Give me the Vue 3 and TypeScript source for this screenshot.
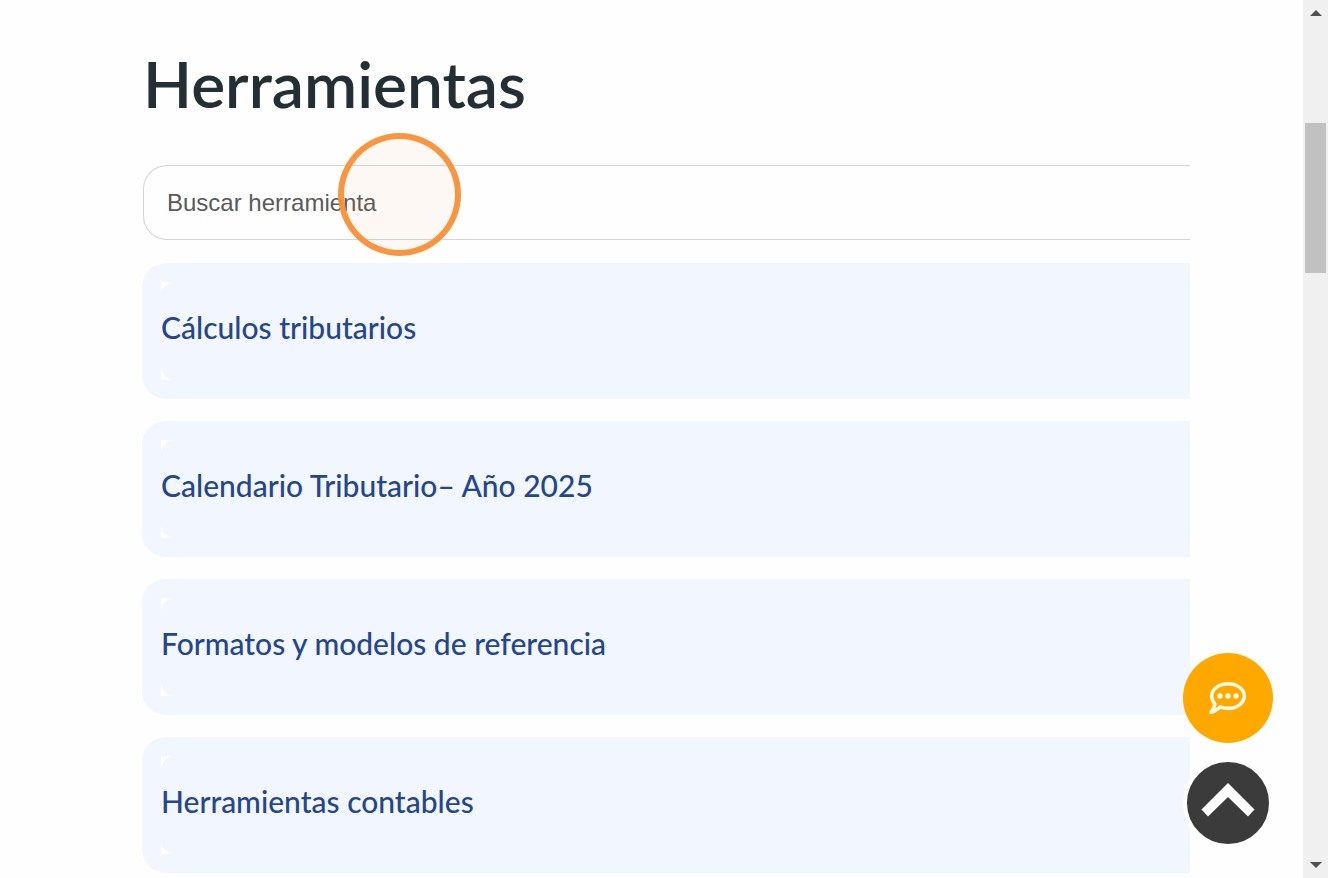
<script setup lang="ts">
import { ref } from 'vue'

const query = ref('')

const tools: string[] = [
  'Cálculos tributarios',
  'Calendario Tributario– Año 2025',
  'Formatos y modelos de referencia',
  'Herramientas contables',
]
</script>

<template>
  <div class="page">
    <main class="content">
      <h1 class="title">Herramientas</h1>
      <div class="search">
        <input v-model="query" class="search-input" type="text" placeholder="Buscar herramienta" aria-label="Buscar herramienta" />
        <span class="marker" aria-hidden="true"></span>
      </div>
      <section class="list">
        <article v-for="tool in tools" :key="tool" class="card">
          <h2 class="card-head">
            <button type="button" class="card-button">{{ tool }}</button>
          </h2>
        </article>
      </section>
    </main>

    <div class="floating">
      <button type="button" class="chat" aria-label="Chat">
        <svg width="38" height="34" viewBox="0 0 38 34" fill="none">
          <path d="M19 2.8C28 2.800 35.300 8.200 35.300 15.100S28 27.400 19 27.400c-2.900 0-5.600-.5-8-1.500C8.600 28.600 5.600 30.700 2 31.200c2-2.400 3.400-4.900 3.900-7.900C3.900 21 2.700 18.200 2.700 15.100 2.700 8.200 10 2.800 19 2.800Z" stroke="#fffbe6" stroke-width="3.600" stroke-linejoin="round" />
          <circle cx="11" cy="15" r="2.700" fill="#fffbe6" />
          <circle cx="19" cy="15" r="2.700" fill="#fffbe6" />
          <circle cx="27" cy="15" r="2.700" fill="#fffbe6" />
        </svg>
      </button>
      <button type="button" class="to-top" aria-label="Volver arriba">
        <svg width="54" height="36" viewBox="0 0 54 36">
          <path d="M27 1 53.500 27.500 47 34.500 27 15 7 34.500 .5 27.500Z" fill="#fff" />
        </svg>
      </button>
    </div>

    <div class="scrollbar" aria-hidden="true">
      <svg class="arrow" width="12" height="6" viewBox="0 0 12 6"><path d="M6 0 12 6H0Z" fill="#505050" /></svg>
      <div class="track"><div class="thumb"></div></div>
      <svg class="arrow" width="12" height="6" viewBox="0 0 12 6"><path d="M0 0H12L6 6Z" fill="#505050" /></svg>
    </div>
  </div>
</template>

<style>
body {
  margin: 0;
  background: #fefefe;
}
</style>

<style scoped>
.page {
  display: flex;
  min-height: 100vh;
  font-family: Lato, "Liberation Sans", sans-serif;
}

.content {
  flex: 1;
  min-width: 0;
  padding: 46px 113px 0 142px;
}

.title {
  margin: 0;
  padding-left: 1px;
  color: #222f35;
  font-size: 64px;
  font-weight: 600;
  line-height: 76px;
}

.search {
  position: relative;
  margin: 43px 0 23px 1px;
}

.search-input {
  display: block;
  box-sizing: border-box;
  width: 100%;
  height: 75px;
  padding: 0 23px;
  border: 1px solid #d4d4d4;
  border-right: 0;
  border-radius: 24px 0 0 24px;
  outline: none;
  background: #fefefe;
  color: #555;
  font-family: "Liberation Sans", Arial, sans-serif;
  font-size: 24px;
}

.search-input::placeholder {
  color: #5a5a5a;
  opacity: 1;
}

.marker {
  position: absolute;
  top: -32px;
  left: 195px;
  box-sizing: border-box;
  width: 123px;
  height: 123px;
  border: 6px solid rgba(249, 143, 53, 0.95);
  border-radius: 50%;
  background: rgba(249, 143, 53, 0.05);
  background-clip: padding-box;
  pointer-events: none;
}

.list {
  display: flex;
  flex-direction: column;
  gap: 22px;
  padding-bottom: 5px;
}

.card {
  padding: 19px 0 19px 19px;
  border-radius: 24px 0 0 24px;
  background: #f1f6ff;
}

.card-head {
  margin: 0;
  background: #fefefe;
}

.card-button {
  display: block;
  width: 100%;
  padding: 26px 0 34px;
  border: 0;
  border-radius: 14px 0 0 14px;
  background: #f1f6ff;
  color: #25468a;
  font-family: inherit;
  font-size: 30px;
  font-weight: 500;
  line-height: 38px;
  text-align: left;
}

.floating {
  position: fixed;
  right: 55px;
  bottom: 30px;
  display: flex;
  flex-direction: column;
  gap: 15px;
}

.chat,
.to-top {
  display: flex;
  align-items: center;
  justify-content: center;
  box-sizing: border-box;
  width: 90px;
  height: 90px;
  padding: 0;
  border: 0;
  border-radius: 50%;
}

.chat {
  background: #ffa800;
}

.to-top {
  padding-bottom: 6px;
  border: 4px solid #fefefe;
  background: #3b3b3b;
}

.scrollbar {
  display: flex;
  flex-direction: column;
  align-items: center;
  box-sizing: border-box;
  width: 25px;
  padding: 10px 0;
  background: #f0f0f0;
}

.arrow {
  flex: none;
}

.track {
  flex: 1;
  align-self: stretch;
  padding: 107px 2px 0;
}

.thumb {
  height: 150px;
  background: #c1c1c1;
}
</style>
